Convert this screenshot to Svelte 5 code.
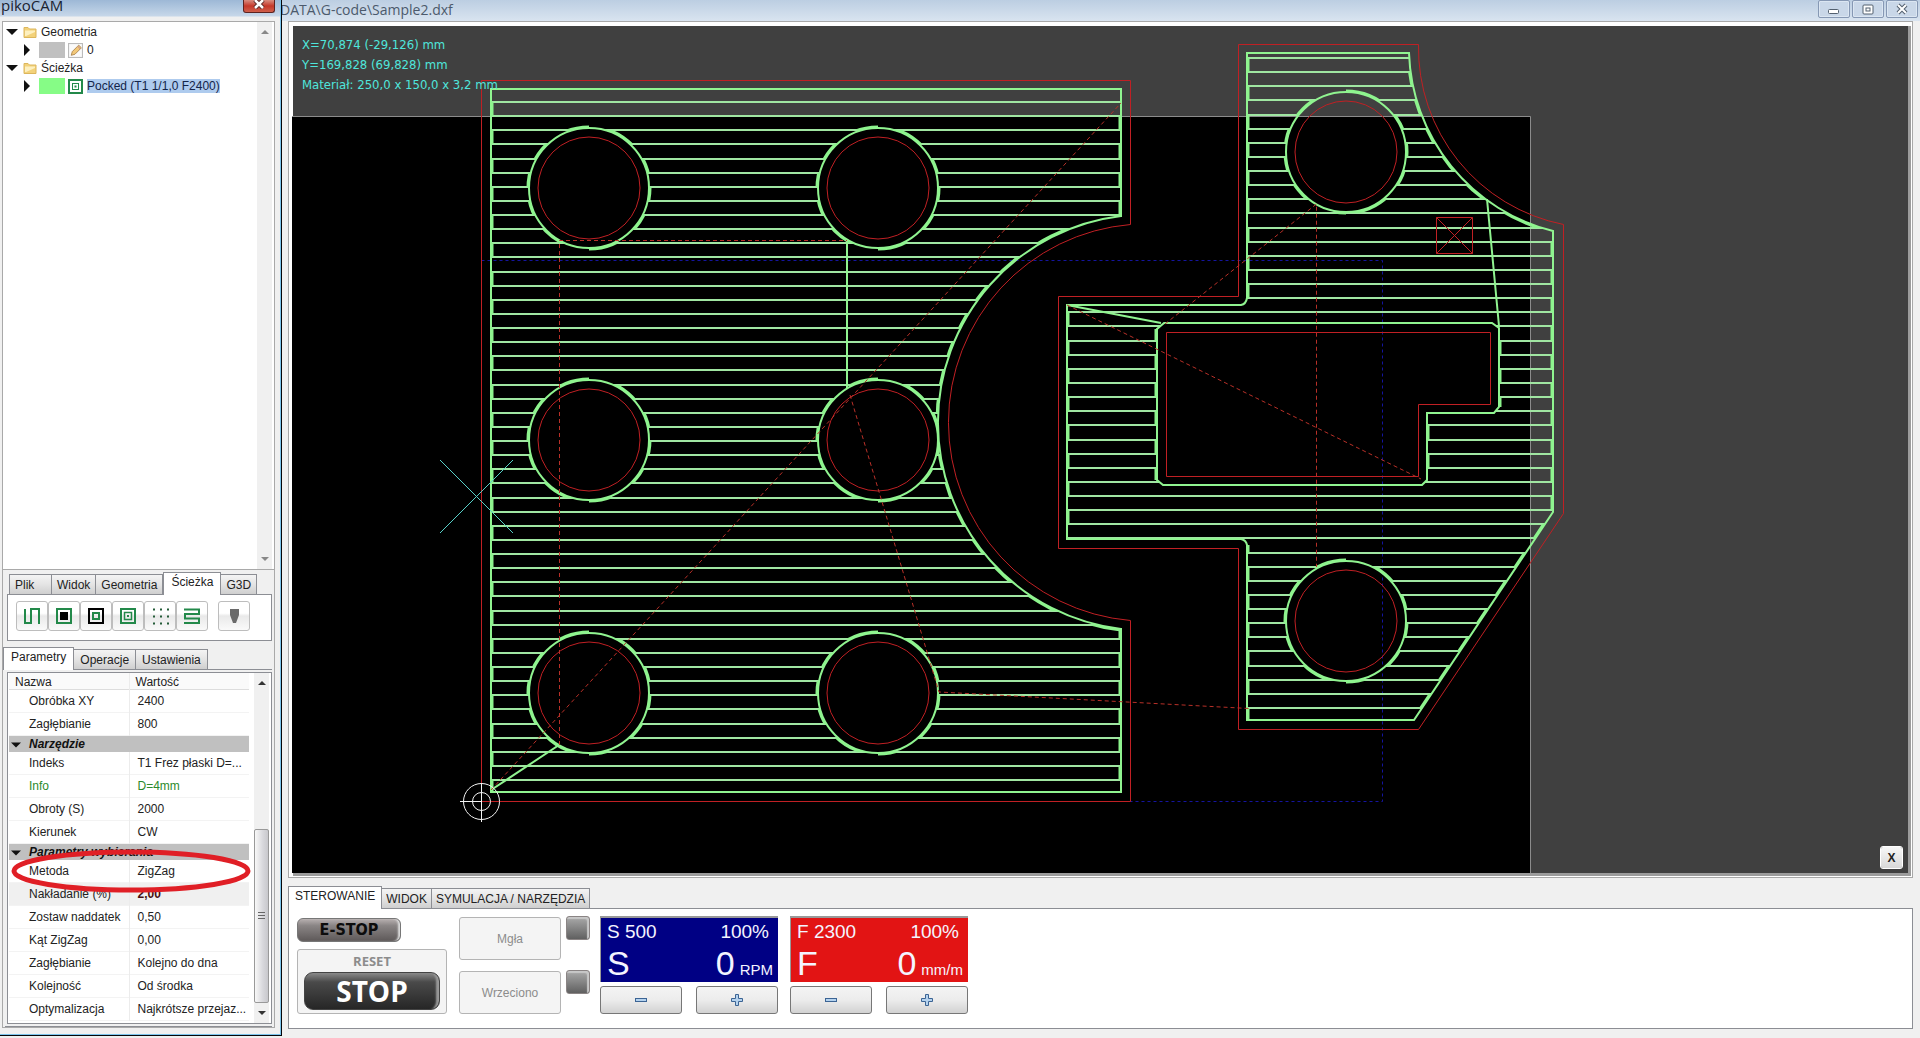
<script>
  const topTabs = ['Plik', 'Widok', 'Geometria', 'Ścieżka', 'G3D'];
  const paramTabs = ['Parametry', 'Operacje', 'Ustawienia'];
  const controlTabs = ['STEROWANIE', 'WIDOK', 'SYMULACJA / NARZĘDZIA'];
  let topTab = $state('Ścieżka');
  let paramTab = $state('Parametry');
  let controlTab = $state('STEROWANIE');

  const rows = [
    { name: 'Obróbka XY', value: '2400' },
    { name: 'Zagłębianie', value: '800' },
    { group: 'Narzędzie' },
    { name: 'Indeks', value: 'T1 Frez płaski D=...' },
    { name: 'Info', value: 'D=4mm', kind: 'info' },
    { name: 'Obroty (S)', value: '2000' },
    { name: 'Kierunek', value: 'CW' },
    { group: 'Parametry wybierania' },
    { name: 'Metoda', value: 'ZigZag', marked: true },
    { name: 'Nakładanie (%)', value: '2,00', kind: 'selected' },
    { name: 'Zostaw naddatek', value: '0,50' },
    { name: 'Kąt ZigZag', value: '0,00' },
    { name: 'Zagłębianie', value: 'Kolejno do dna' },
    { name: 'Kolejność', value: 'Od środka' },
    { name: 'Optymalizacja', value: 'Najkrótsze przejaz...' }
  ];

  const meters = [
    { id: 'spindle', letter: 'S', set: '500', unit: 'RPM' },
    { id: 'feed', letter: 'F', set: '2300', unit: 'mm/m' }
  ];

  // Circle and half circle path builders; side 1 is the right half, 0 the left.
  const circle = ([x, y], r) => `M${x - r} ${y}a${r} ${r} 0 1 0 ${2 * r} 0a${r} ${r} 0 1 0 ${-2 * r} 0Z`;
  const half = ([x, y], r, side) => `M${x} ${y - r}A${r} ${r} 0 0 ${side} ${x} ${y + r}`;

  function hatch(x1, x2, y0, step, count) {
    let d = '';
    for (let k = 0; k < count; k++) d += `M${x1} ${Math.round(y0 + k * step)}H${x2}`;
    return d;
  }
  function bands(x1, x2, y0, step, count, parity) {
    let d = '';
    for (let k = parity; k < count; k += 2) {
      const a = Math.round(y0 + k * step);
      const b = Math.round(y0 + (k + 1) * step);
      d += `M${x1} ${a}H${x2}V${b}H${x1}Z`;
    }
    return d;
  }

  const plateHoles = [[589, 188], [878, 188], [589, 440], [878, 440], [589, 693], [878, 693]];
  const bracketHoles = [[1346, 152], [1346, 621]];
  const plateArc = 'M1121 216A208 208 0 0 0 1121 629';
  const bracketArc = 'M1409 53A190 190 0 0 0 1553 231';
  const windowRed = 'M1166.5 332.5H1490.5V404.5H1418.5V476.5H1166.5Z';
  const windowGreen = 'M1164 323H1492L1499 328V407L1494 413H1427V480L1422 485H1163L1157 480V329Z';

  const parts = [
    {
      id: 'plate',
      red: 'M481.5 80.5H1130.5V224.5A198.7 198.7 0 0 0 1130.5 620.5V801.5H481.5Z' + plateHoles.map((c) => circle(c, 51)).join(''),
      green: 'M491 89H1121V216A208 208 0 0 0 1121 629V792H491Z' + plateHoles.map((c) => circle(c, 60)).join(''),
      hatch: hatch(490, 1122, 102, 14.125, 49),
      even: bands(480, 1140, 102, 14.125, 49, 0),
      odd: bands(480, 1140, 102, 14.125, 49, 1),
      left: 'M491 89V792' + plateHoles.map((c) => half(c, 60, 1)).join(''),
      right: 'M1121 89V216M1121 629V792' + plateArc + plateHoles.map((c) => half(c, 60, 0)).join('')
    },
    {
      id: 'bracket',
      red: 'M1238.5 44.5H1418.5A180 180 0 0 0 1563.5 224.5V513.5L1418.5 729.5H1238.5V548.5H1058.5V296.5H1238.5Z' + windowRed + bracketHoles.map((c) => circle(c, 51)).join(''),
      green: 'M1247 53H1409A190 190 0 0 0 1553 231V512L1414 720H1247V545Q1246 540 1241 539H1067V305H1241Q1246 304 1247 298Z' + windowGreen + bracketHoles.map((c) => circle(c, 60)).join(''),
      hatch: hatch(1066, 1554, 58, 14.13, 47),
      even: bands(1050, 1570, 58, 14.13, 47, 0),
      odd: bands(1050, 1570, 58, 14.13, 47, 1),
      left: 'M1247 53V298M1067 305V539M1247 545V720M1499 328V407M1427 413V480' + bracketHoles.map((c) => half(c, 60, 1)).join(''),
      right: 'M1553 231V512L1414 720M1157 329V480' + bracketArc + bracketHoles.map((c) => half(c, 60, 0)).join('')
    }
  ];
</script>

{#snippet tabs(list, current, pick, label)}
  <div class="tabs" role="tablist" aria-label={label}>
    {#each list as tab}
      <button class="tab" class:active={tab === current} role="tab" aria-selected={tab === current} onclick={() => pick(tab)}>{tab}</button>
    {/each}
  </div>
{/snippet}

{#snippet expander(open)}
  <svg class="expander" viewBox="0 0 12 12" aria-hidden="true">
    {#if open}<path d="M0 3H12L6 9Z" />{:else}<path d="M3 0L9 6L3 12Z" />{/if}
  </svg>
{/snippet}

{#snippet folder()}
  <svg class="folder" viewBox="0 0 14 14" aria-hidden="true">
    <path d="M1 2.500H5L6.500 4H13V12.500H1Z" fill="#f3d27a" stroke="#dcb65c" />
    <path d="M2 5.500H12V7L3 11H2Z" fill="#fdf0c0" />
  </svg>
{/snippet}

{#snippet scrollbar(thumb)}
  <div class="scrollbar" class:idle={!thumb}>
    <svg viewBox="0 0 8 4" aria-hidden="true"><path d="M0 4H8L4 0Z" /></svg>
    {#if thumb}<div class="thumb"><i></i><i></i><i></i></div>{/if}
    <svg viewBox="0 0 8 4" aria-hidden="true"><path d="M0 0H8L4 4Z" /></svg>
  </div>
{/snippet}

<div class="app">
  <aside class="side">
    <header class="side-title">
      <span>pikoCAM</span>
      <button class="close" aria-label="Close">
        <svg viewBox="0 0 12 10" aria-hidden="true"><path d="M2 1L10 9M10 1L2 9" stroke="#5a2a28" stroke-width="4.500" /><path d="M2 1L10 9M10 1L2 9" stroke="#fff" stroke-width="2.500" /></svg>
      </button>
    </header>

    <div class="side-frame">
      <div class="tree">
        <ul>
          <li>{@render expander(true)}{@render folder()}<span>Geometria</span></li>
          <li class="child">
            {@render expander(false)}<b class="swatch gray"></b>
            <svg class="node-icon" viewBox="0 0 14 14" aria-hidden="true"><rect x="0.500" y="0.500" width="13" height="13" fill="#fafafa" stroke="#bbb" /><path d="M3 11.500L4 8L10 2L12.500 4.500L6.500 10.500Z" fill="#f2c878" stroke="#a8814a" stroke-width="0.800" /><path d="M9 3L11.500 5.500" stroke="#c98" /></svg>
            <span>0</span>
          </li>
          <li>{@render expander(true)}{@render folder()}<span>Ścieżka</span></li>
          <li class="child">
            {@render expander(false)}<b class="swatch green"></b>
            <svg class="node-icon" viewBox="0 0 15 15" aria-hidden="true"><rect x="1" y="1" width="13" height="13" fill="#fff" stroke="#23894a" stroke-width="2" /><rect x="4.500" y="4.500" width="6" height="6" stroke="#23894a" /><rect x="6.500" y="6.500" width="2" height="2" fill="#23894a" /></svg>
            <span class="chosen">Pocked (T1 1/1,0 F2400)</span>
          </li>
        </ul>
        {@render scrollbar(false)}
      </div>

      <section class="tools">
        {@render tabs(topTabs, topTab, (t) => (topTab = t), 'Narzędzia')}
        <div class="toolbar">
          <button aria-label="Kontur"><svg viewBox="0 0 18 18"><path d="M2 2V16H8V2H16V17" stroke="#23894a" stroke-width="2" /></svg></button>
          <button aria-label="Kieszeń pełna"><svg viewBox="0 0 18 18"><rect x="2" y="2" width="14" height="14" stroke="#23894a" stroke-width="2" /><rect x="5" y="5" width="8" height="8" fill="#000" /></svg></button>
          <button aria-label="Wyspa"><svg viewBox="0 0 18 18"><rect x="2" y="2" width="14" height="14" stroke="#000" stroke-width="2" /><rect x="6" y="6" width="6" height="6" stroke="#23894a" stroke-width="2" /></svg></button>
          <button aria-label="Wybieranie"><svg viewBox="0 0 18 18"><rect x="2" y="2" width="14" height="14" stroke="#23894a" stroke-width="2" /><rect x="5.500" y="5.500" width="7" height="7" stroke="#23894a" stroke-width="1.500" /><rect x="8" y="8" width="2" height="2" fill="#23894a" /></svg></button>
          <button aria-label="Wiercenie"><svg viewBox="0 0 18 18"><path d="M2 2.500H18M2 9.500H18M2 16.500H18" stroke="#245c38" stroke-width="2" stroke-dasharray="2 5" /></svg></button>
          <button aria-label="Frezowanie ZigZag"><svg viewBox="0 0 18 18"><path d="M1 2.500H16V7H2V11.500H16V16H1" stroke="#23894a" stroke-width="2" /></svg></button>
          <button class="apart" aria-label="Frez"><svg viewBox="0 0 18 18"><path d="M5 2H14V8L11 16H8L5 8Z" fill="#6a6a6a" /></svg></button>
        </div>
      </section>

      <section class="params">
        {@render tabs(paramTabs, paramTab, (t) => (paramTab = t), 'Parametry')}
        <div class="params-panel">
          <div class="params-inner">
            <table>
              <colgroup><col class="name-col" /><col /></colgroup>
              <thead><tr><th>Nazwa</th><th>Wartość</th></tr></thead>
              <tbody>
                {#each rows as row}
                  {#if row.group}
                    <tr class="group"><th colspan="2">{@render expander(true)}{row.group}</th></tr>
                  {:else}
                    <tr class={row.kind}>
                      <td>
                        {row.name}
                        {#if row.marked}<svg class="mark" viewBox="0 0 240 46" aria-hidden="true"><ellipse cx="120" cy="23" rx="117" ry="19" /></svg>{/if}
                      </td>
                      <td>{row.value}</td>
                    </tr>
                  {/if}
                {/each}
              </tbody>
            </table>
            {@render scrollbar(true)}
          </div>
        </div>
      </section>
    </div>
  </aside>

  <main class="main">
    <header class="main-title">
      <h1>DATA\G-code\Sample2.dxf</h1>
      <div class="window-buttons">
        <button aria-label="Minimize"><svg viewBox="0 0 14 12"><rect x="1.500" y="6.500" width="10" height="4" rx="1" fill="#fff" stroke="#53606f" /></svg></button>
        <button aria-label="Restore"><svg viewBox="0 0 14 12"><rect x="2" y="2" width="10" height="9" rx="1" fill="#fff" stroke="#53606f" /><rect x="5" y="5" width="4" height="3" fill="#fff" stroke="#53606f" /></svg></button>
        <button aria-label="Close document"><svg viewBox="0 0 14 12"><path d="M3 2L11 10M11 2L3 10" stroke="#53606f" stroke-width="4" /><path d="M3 2L11 10M11 2L3 10" stroke="#fff" stroke-width="2" /></svg></button>
      </div>
    </header>

    <div class="viewport">
      <svg class="drawing" viewBox="292 26 1616 847" preserveAspectRatio="xMinYMin meet" role="img" aria-label="Sample2.dxf">
        <rect x="292" y="116" width="1238" height="760" fill="#000" />
        <path class="stock" d="M292 116.500H1530.500V873" />
        <defs>
          {#each parts as part}
            <clipPath id="{part.id}-area"><path d={part.green} clip-rule="evenodd" /></clipPath>
            <clipPath id="{part.id}-even"><path d={part.even} /></clipPath>
            <clipPath id="{part.id}-odd"><path d={part.odd} /></clipPath>
          {/each}
        </defs>
        <path class="limit" d="M481.500 260.500H1382.500V801.500H481.500" />
        {#each parts as part}
          <g clip-path="url(#{part.id}-area)">
            <path class="hatch" d={part.hatch} />
            <g clip-path="url(#{part.id}-even)"><path class="link" d={part.left} /></g>
            <g clip-path="url(#{part.id}-odd)"><path class="link" d={part.right} /></g>
          </g>
          <path class="tool" d={part.green} />
          <path class="contour" d={part.red} />
        {/each}
        <path class="tool" d="M491 790L559 745M847 241V388M1067 305L1161 323M1487 199L1499 326" />
        <path class="travel" d="M491 790L1121 103M559.500 745V240.500H847M850 395L939 692L1249 708.500M1067 305L1421 479M1165 324L1316.500 204V567" />
        <path class="contour" d="M1436.500 217.500H1472.500V253.500H1436.500ZL1472.500 253.500M1472.500 217.500L1436.500 253.500" />
        <path class="cursor" d="M440 460L513 533M513 460L440 533" />
        <g class="origin"><circle cx="481.500" cy="801.500" r="18" /><circle cx="481.500" cy="801.500" r="9" /><path d="M460 801.500H481M481.500 783V822" /></g>
      </svg>
      <div class="readout">
        <div>X=70,874 (-29,126) mm</div>
        <div>Y=169,828 (69,828) mm</div>
        <div>Materiał: 250,0 x 150,0 x 3,2 mm</div>
      </div>
      <button class="corner">X</button>
    </div>

    <section class="control">
      {@render tabs(controlTabs, controlTab, (t) => (controlTab = t), 'Sterowanie')}
      <div class="control-panel">
        <div class="stops">
          <button class="estop">E-STOP</button>
          <div class="reset">
            <span>RESET</span>
            <button class="stop">STOP</button>
          </div>
        </div>
        <div class="switches">
          <button class="switch" disabled>Mgła</button><i class="led"></i>
          <button class="switch" disabled>Wrzeciono</button><i class="led"></i>
        </div>
        {#each meters as m}
          <div class="meter">
            <div class="display {m.id}">
              <div class="line"><span>{m.letter} {m.set}</span><span>100%</span></div>
              <div class="line big"><span>{m.letter}</span><span class="actual">0</span><small>{m.unit}</small></div>
            </div>
            <div class="steps">
              <button aria-label="{m.letter} minus"><svg viewBox="0 0 12 12"><rect x="0.500" y="4.500" width="11" height="3" /></svg></button>
              <button aria-label="{m.letter} plus"><svg viewBox="0 0 12 12"><path d="M4.500 0.500H7.500V4.500H11.500V7.500H7.500V11.500H4.500V7.500H0.500V4.500H4.500Z" /></svg></button>
            </div>
          </div>
        {/each}
      </div>
    </section>
  </main>
</div>

<style>
  :global(body) { margin: 0; background: #f0f0f0; }
  .app { display: grid; grid-template-columns: 282px 1fr; min-height: 100vh; font: 12px/18px "Liberation Sans", Arial, sans-serif; color: #222; background: #f0f0f0; }
  .app *, .app { box-sizing: border-box; }
  button { font: inherit; color: inherit; padding: 0; margin: 0; }
  svg { display: block; fill: none; }

  .side { display: flex; flex-direction: column; margin-bottom: 2px; padding: 0 6px 7px 2px; border-right: 1px solid #05070a; border-bottom: 1px solid #05070a; box-shadow: inset -1px -1px 0 #7cc4ec; background: linear-gradient(#9db8d6, #c6d7e9 16px, #f0f0f0 17px); }
  .side-title { display: flex; justify-content: space-between; height: 21px; font: 15px/10px "Open Sans", sans-serif; color: #1a2230; }
  .side-title span { margin-left: -1px; }
  .close { display: flex; align-items: center; justify-content: center; width: 32px; height: 13px; border: 1px solid #5d2320; border-top: 0; border-radius: 0 0 3px 3px; background: linear-gradient(#d98d80, #c5382a 50%, #d0604c); }
  .close svg { width: 12px; height: 10px; margin-bottom: 4px; }

  .side-frame { flex: 1; display: flex; flex-direction: column; border: 1px solid #a9a9a9; background: #f0f0f0; }
  .tree { flex: 1; display: flex; justify-content: space-between; padding-right: 2px; background: #fff; border-bottom: 1px solid #a9a9a9; }
  ul { list-style: none; margin: 0; padding: 1px 0 0 3px; }
  li { display: flex; align-items: center; height: 18px; }
  li.child { padding-left: 15px; }
  .expander { width: 12px; height: 12px; fill: #111; margin-right: 5px; }
  .folder { width: 14px; height: 14px; margin-right: 4px; }
  .swatch { width: 26px; height: 16px; margin-right: 3px; }
  li.child .expander { margin-right: 6px; }
  .gray { background: #c0c0c0; }
  .green { background: #86fc86; }
  .node-icon { width: 15px; height: 15px; margin-right: 4px; }
  .chosen { height: 14px; line-height: 14px; background: #aecbee; color: #12244a; }

  .scrollbar { width: 15px; display: flex; flex-direction: column; align-items: center; justify-content: space-between; padding: 8px 0; background: #f0f0f0; }
  .scrollbar svg { width: 8px; height: 4px; fill: #333; }
  .scrollbar.idle svg { fill: #888; }
  .thumb { width: 15px; height: 174px; margin: auto 0 8px; display: flex; flex-direction: column; align-items: center; justify-content: center; gap: 1px; border: 1px solid #999; border-radius: 2px; background: linear-gradient(90deg, #f8f8f8, #d8d8dc 60%, #c8c8cc); }
  .thumb i { width: 7px; height: 2px; border-top: 1px solid #666; }

  .tabs { display: flex; align-items: flex-end; height: 22px; }
  .tab { height: 20px; padding: 0 5px; border: 1px solid #8c8e94; border-left-width: 0; border-bottom: 0; background: linear-gradient(#f4f4f4, #e4e4e4 50%, #cfcfcf); white-space: nowrap; }
  .tab:first-child { border-left-width: 1px; }
  .tab.active { height: 23px; margin-bottom: -1px; padding-bottom: 4px; background: #fff; border-left-width: 1px; z-index: 1; }
  .tools { padding: 2px 2px 0 4px; }
  .tools .tabs { padding-left: 2px; }
  .tools .tab { padding: 0 5px; }
  .tools .tab.active { padding: 0 7px 4px; }
  .tools .tab:first-child { min-width: 43px; text-align: left; }
  .toolbar { display: flex; height: 47px; padding: 6px 8px; border: 1px solid #8c8e94; background: #fff; }
  .toolbar button { display: grid; place-items: center; width: 32px; height: 30px; border: 1px solid #bdbdbd; border-radius: 3px; background: linear-gradient(#fff 40%, #e9e9e9 50%, #fafafa); }
  .toolbar svg { width: 18px; height: 18px; }
  .toolbar .apart { margin-left: 10px; }

  .params { padding-top: 6px; }
  .params .tab { padding: 0 6px; }
  .params .tab.active { padding: 0 7px 4px; }
  .params-panel { margin: 0 2px 0 2px; padding: 2px 0; border: 1px solid #8c8e94; border-width: 1px 0; }
  .params-inner { display: flex; justify-content: space-between; margin: 0 0 0 2px; padding: 0 2px 2px 1px; border: 1px solid #8c8e94; background: #fff; }
  .params .scrollbar { margin-bottom: -2px; }
  table { width: 240px; table-layout: fixed; border-collapse: collapse; line-height: 14px; }
  .name-col { width: 120px; }
  th { font-weight: 400; text-align: left; padding: 0 6px; white-space: nowrap; }
  thead tr { height: 17px; background: #fafafa; box-shadow: inset 0 -1px 0 #ddd; }
  td { position: relative; height: 23px; padding: 0 0 2px 20px; white-space: nowrap; box-shadow: inset 0 -1px 0 #f3f3f3; }
  td + td { padding-left: 8px; border-left: 1px solid #ececec; }
  th + th { border-left: 1px solid #ececec; }
  .group { height: 16px; background: #c0c0c0; }
  .group th { padding: 0; font-weight: 700; font-style: italic; color: #111; }
  .group .expander { display: inline-block; width: 10px; height: 10px; margin: 0 8px 0 2px; vertical-align: middle; }
  .info { color: #2c8a2c; }
  .selected { background: #f0f0f0; }
  .selected td + td { font-weight: 700; color: #4a1010; }
  .mark { position: absolute; left: 2px; top: -12px; width: 240px; height: 46px; z-index: 2; stroke: #e01f26; stroke-width: 5; pointer-events: none; }

  .main { display: flex; flex-direction: column; min-width: 0; padding: 0 7px 9px 6px; }
  .main-title { display: flex; justify-content: space-between; height: 21px; margin: 0 -7px 0 -6px; padding: 0 2px 0 0; overflow: hidden; background: linear-gradient(#bccee2, #d9e4f0); }
  h1 { margin: 0 0 0 -2px; font: 400 14px/19px "Open Sans", sans-serif; color: #4c5a6c; }
  .window-buttons { display: flex; gap: 2px; }
  .window-buttons button { display: grid; place-items: center; width: 32px; height: 18px; border: 1px solid #8698b4; border-radius: 2px; background: #c9d7e8; box-shadow: inset 0 0 0 1px #dbe6f2; }
  .window-buttons svg { width: 14px; height: 12px; }

  .viewport { position: relative; flex: 1; min-height: 0; border: 1px solid #a8a8a8; padding: 4px 4px 4px 3px; background: #404040; background-clip: content-box; box-shadow: inset 0 0 0 1px #fff, inset 4px 4px 0 #fff, inset -4px -4px 0 #9c9c9c; }
  .drawing { width: 100%; height: 100%; }
  .stock { stroke: #8c8c8c; }
  .limit { stroke: #1414a0; stroke-dasharray: 3 3; }
  .hatch { stroke: #a0e6a2; stroke-width: 2; }
  .tool { stroke: #90f490; stroke-width: 2; }
  .link { stroke: #8cf48c; stroke-width: 5; }
  .contour { stroke: #c02024; }
  .travel { stroke: #b83028; stroke-dasharray: 4 3; }
  .cursor { stroke: #58d0c8; }
  .origin { stroke: #f4f4f4; }
  .readout { position: absolute; left: 13px; top: 13px; font: 13px/20px "DejaVu Sans Condensed", "DejaVu Sans", sans-serif; font-stretch: condensed; color: #4fe6dc; }
  .corner { position: absolute; right: 9px; bottom: 8px; width: 23px; height: 23px; border: 1px solid #777; border-radius: 3px; outline: 1px solid #fff; outline-offset: -1px; background: linear-gradient(#f8f8f8, #d8d8d8); font-weight: 700; }

  .control { margin-top: 8px; }
  .control .tab { padding: 0 4px; }
  .control .tab.active { padding: 0 6px 4px; }
  .control-panel { display: flex; height: 121px; padding: 7px 8px; border: 1px solid #8c8e94; background: #fff; }
  .stops { width: 150px; margin-right: 12px; display: flex; flex-direction: column; align-items: flex-start; gap: 7px; padding-top: 2px; }
  .estop { width: 104px; height: 24px; border: 1px solid #777; border-radius: 6px; background: linear-gradient(#b8b0b0, #8a8585 30%, #5e5959); box-shadow: inset -3px 0 2px -1px #ddd; font: 700 16px/22px "DejaVu Sans Condensed", "DejaVu Sans", sans-serif; font-stretch: condensed; color: #0c0c0c; }
  .reset { width: 150px; height: 65px; display: flex; flex-direction: column; align-items: center; padding: 3px 6px; border: 1px solid #b4b4b4; border-radius: 3px; background: #f4f4f4; font: 700 13px/17px "Open Sans", sans-serif; color: #8c8c8c; }
  .reset span { height: 20px; }
  .stop { width: 136px; height: 38px; border: 1px solid #444; border-radius: 9px; background: linear-gradient(#8a8a8a, #4a4a4a 25%, #262626); box-shadow: inset -6px 0 2px -3px #999; font: 700 28px/36px "Open Sans", "DejaVu Sans", sans-serif; color: #fff; }
  .switches { display: grid; grid-template-columns: 102px 24px; grid-auto-rows: 44px; gap: 10px 5px; margin-right: 10px; }
  .switch { height: 43px; margin-top: 1px; border: 1px solid #b4b4b4; border-radius: 3px; background: #f4f4f4; color: #8c8c8c; }
  .led { width: 24px; height: 24px; border-radius: 3px; border: 1px solid #8a8484; background: linear-gradient(#aaa, #606060); box-shadow: inset -2px 2px 1px #c8c8c8; }
  .meter { width: 178px; margin-right: 12px; display: flex; flex-direction: column; gap: 4px; }
  .display { height: 66px; padding: 3px 5px 3px 6px; border: 1px solid #999; border-width: 2px 0 0 1px; color: #f4f4ff; }
  .spindle { background: #000084; }
  .feed { background: #e21414; }
  .line { display: flex; justify-content: space-between; font-size: 19px; line-height: 22px; padding-right: 4px; }
  .big { align-items: baseline; font-size: 34px; line-height: 40px; padding: 0; }
  .actual { margin-left: auto; }
  small { font-size: 15px; line-height: 18px; margin-left: 5px; }
  .steps { display: flex; justify-content: space-between; }
  .steps button { display: grid; place-items: center; width: 82px; height: 28px; border: 1px solid #777; border-radius: 3px; background: linear-gradient(#f4f4f4, #ececec 50%, #d2d2d2); }
  .steps svg { width: 12px; height: 12px; fill: #b4d2ee; stroke: #3c6494; }
</style>
